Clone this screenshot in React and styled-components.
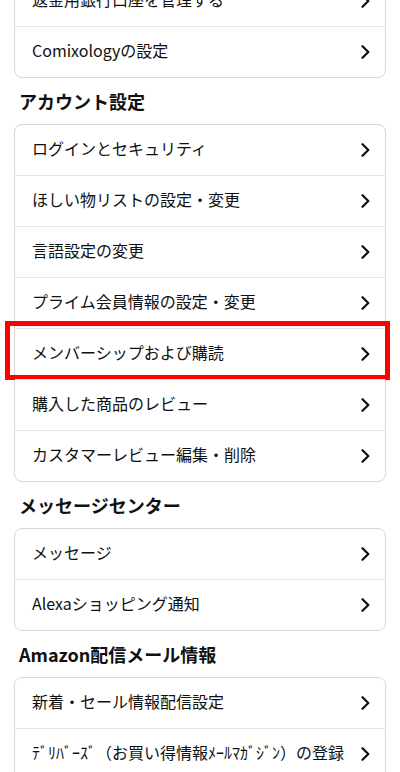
import React from "react";
import styled, { createGlobalStyle } from "styled-components";

const Global = createGlobalStyle`
  html, body { margin: 0; padding: 0; background: #ffffff; }
  body {
    font-family: "Noto Sans CJK JP", "Noto Sans", sans-serif;
    color: #0f1111;
    overflow: hidden;
  }
`;

const Page = styled.div`
  width: 400px;
  height: 772px;
  overflow: hidden;
  padding: 0 14px;
  box-sizing: border-box;
`;

const Card = styled.div`
  border: 1px solid #d5d9d9;
  border-radius: 8px;
  margin-top: ${(p) => (p.$first ? "-25px" : "0")};
`;

const Heading = styled.h2`
  margin: 0;
  padding: 11px 0 11px 5px;
  font-size: 18px;
  line-height: 24px;
  font-weight: 700;
  color: #0f1111;
`;

const Row = styled.div`
  position: relative;
  height: 50px;
  display: flex;
  align-items: center;
  justify-content: space-between;
  padding: 0 15px 0 17px;
  border-top: ${(p) => (p.$first ? "none" : "1px solid #e3e6e6")};
  font-size: 16px;
  line-height: 20px;
  color: #0f1111;
  white-space: nowrap;
`;

const Label = styled.span`
  padding-bottom: 5px;
`;

const Highlight = styled.div`
  position: absolute;
  top: -8px;
  bottom: -1px;
  left: -10px;
  right: -5px;
  border: 5px solid #ff0000;
  pointer-events: none;
`;

const Chevron = () => (
  <svg width="9" height="14" viewBox="0 0 9 14" style={{ flexShrink: 0 }}>
    <path d="M1.5 1.2 L7.3 7 L1.5 12.8" fill="none" stroke="#0f1111" strokeWidth="2.2" strokeLinecap="round" strokeLinejoin="round" />
  </svg>
);

const sections = [
  { title: null, items: ["返金用銀行口座を管理する", "Comixologyの設定"] },
  {
    title: "アカウント設定",
    items: [
      "ログインとセキュリティ",
      "ほしい物リストの設定・変更",
      "言語設定の変更",
      "プライム会員情報の設定・変更",
      "メンバーシップおよび購読",
      "購入した商品のレビュー",
      "カスタマーレビュー編集・削除",
    ],
  },
  { title: "メッセージセンター", items: ["メッセージ", "Alexaショッピング通知"] },
  {
    title: "Amazon配信メール情報",
    items: ["新着・セール情報配信設定", "ﾃﾞﾘﾊﾞｰｽﾞ（お買い得情報ﾒｰﾙﾏｶﾞｼﾞﾝ）の登録"],
  },
];

export default function App() {
  return (
    <>
      <Global />
      <Page>
        {sections.map((s, si) => (
          <React.Fragment key={si}>
            {s.title && <Heading>{s.title}</Heading>}
            <Card $first={si === 0}>
              {s.items.map((it, i) => (
                <Row key={it} $first={i === 0}>
                  <Label>{it}</Label>
                  <Chevron />
                  {it === "メンバーシップおよび購読" && <Highlight />}
                </Row>
              ))}
            </Card>
          </React.Fragment>
        ))}
      </Page>
    </>
  );
}
